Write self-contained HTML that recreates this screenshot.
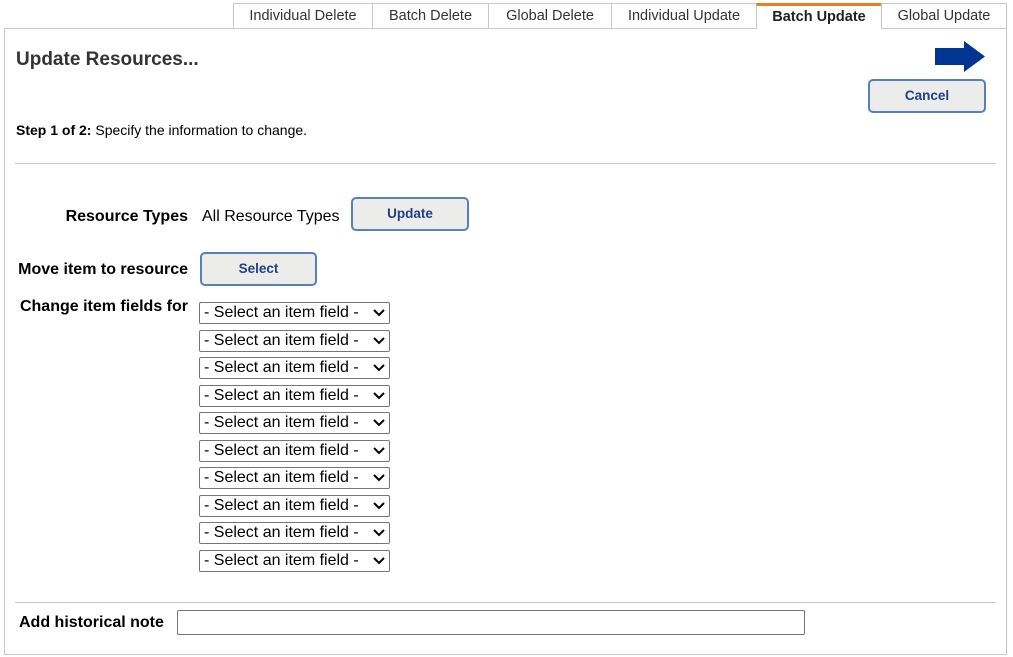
<!DOCTYPE html>
<html><head><style>
body{margin:0;width:1013px;height:657px;background:#fff;font-family:"Liberation Sans",Arial,sans-serif;position:relative;overflow:hidden;color:#000}
.a{position:absolute}
.tab{position:absolute;top:3px;border:1px solid #c8c8c8;border-bottom:none;background:#fff;font-size:14.5px;color:#333;text-align:center;line-height:24px;box-sizing:border-box;height:25px}
.box{position:absolute;left:4px;top:28px;width:1003px;height:627px;border:1px solid #c8c8c8;box-sizing:border-box}
.btn{position:absolute;background:#ececea;border:2px solid #5a7fb8;border-radius:5px;box-sizing:border-box;color:#1f3f88;font-weight:bold;font-size:13.5px;text-align:center}
.sel{position:absolute;left:199px;width:191px;height:22px;border:1px solid #767676;box-sizing:border-box;font-size:16px;line-height:20px;padding-left:4px;border-radius:2px}
.sel svg{position:absolute;right:4px;top:6px}
.lbl{position:absolute;font-weight:bold;font-size:16px;text-align:right}
</style></head><body>
<div class="box"></div>
<div class="tab" style="left:233px;width:140px">Individual Delete</div>
<div class="tab" style="left:372px;width:117px">Batch Delete</div>
<div class="tab" style="left:488px;width:124px">Global Delete</div>
<div class="tab" style="left:611px;width:146px">Individual Update</div>
<div class="tab" style="left:756px;width:126px;border-top:3px solid #e87e1e;font-weight:bold;color:#222;line-height:22px;height:26px">Batch Update</div>
<div class="tab" style="left:881px;width:126px">Global Update</div>
<div class="a" style="left:16px;top:49px;font-size:19px;font-weight:bold;color:#333">Update Resources...</div>
<svg class="a" style="left:935px;top:41px" width="50" height="31"><polygon points="0,7 29,7 29,0 50,15.5 29,31 29,24 0,24" fill="#003591"/></svg>
<div class="btn" style="left:868px;top:79px;width:118px;height:34px;line-height:30px">Cancel</div>
<div class="a" style="left:16px;top:122px;font-size:14px"><b>Step 1 of 2:</b> Specify the information to change.</div>
<div class="a" style="left:15px;top:163px;width:981px;height:1px;background:#c8c8c8"></div>
<div class="lbl" style="left:0;width:188px;top:208px">Resource Types</div>
<div class="a" style="left:202px;top:208px;font-size:16px">All Resource Types</div>
<div class="btn" style="left:351px;top:197px;width:118px;height:34px;line-height:30px">Update</div>
<div class="lbl" style="left:0;width:188px;top:261px">Move item to resource</div>
<div class="btn" style="left:200px;top:252px;width:117px;height:34px;line-height:30px">Select</div>
<div class="lbl" style="left:0;width:188px;top:298px">Change item fields for</div>
<div class="sel" style="top:302px">- Select an item field -<svg width="12" height="8"><path d="M1 1l5 5 5-5" stroke="#000" stroke-width="2" fill="none"/></svg></div>
<div class="sel" style="top:330px">- Select an item field -<svg width="12" height="8"><path d="M1 1l5 5 5-5" stroke="#000" stroke-width="2" fill="none"/></svg></div>
<div class="sel" style="top:357px">- Select an item field -<svg width="12" height="8"><path d="M1 1l5 5 5-5" stroke="#000" stroke-width="2" fill="none"/></svg></div>
<div class="sel" style="top:385px">- Select an item field -<svg width="12" height="8"><path d="M1 1l5 5 5-5" stroke="#000" stroke-width="2" fill="none"/></svg></div>
<div class="sel" style="top:412px">- Select an item field -<svg width="12" height="8"><path d="M1 1l5 5 5-5" stroke="#000" stroke-width="2" fill="none"/></svg></div>
<div class="sel" style="top:440px">- Select an item field -<svg width="12" height="8"><path d="M1 1l5 5 5-5" stroke="#000" stroke-width="2" fill="none"/></svg></div>
<div class="sel" style="top:467px">- Select an item field -<svg width="12" height="8"><path d="M1 1l5 5 5-5" stroke="#000" stroke-width="2" fill="none"/></svg></div>
<div class="sel" style="top:495px">- Select an item field -<svg width="12" height="8"><path d="M1 1l5 5 5-5" stroke="#000" stroke-width="2" fill="none"/></svg></div>
<div class="sel" style="top:522px">- Select an item field -<svg width="12" height="8"><path d="M1 1l5 5 5-5" stroke="#000" stroke-width="2" fill="none"/></svg></div>
<div class="sel" style="top:550px">- Select an item field -<svg width="12" height="8"><path d="M1 1l5 5 5-5" stroke="#000" stroke-width="2" fill="none"/></svg></div>
<div class="a" style="left:15px;top:602px;width:981px;height:1px;background:#c8c8c8"></div>
<div class="lbl" style="left:19px;top:614px;text-align:left">Add historical note</div>
<div class="a" style="left:177px;top:610px;width:628px;height:25px;border:1px solid #767676;box-sizing:border-box;border-radius:2px"></div>
</body></html>
